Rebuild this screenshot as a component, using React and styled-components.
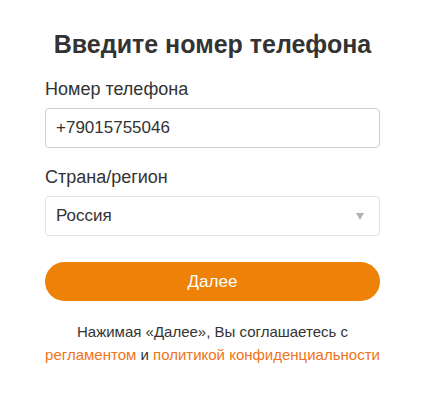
import React from "react";
import styled, { createGlobalStyle } from "styled-components";

const Global = createGlobalStyle`
  html, body { margin: 0; padding: 0; background: #fff; }
  body { font-family: "Liberation Sans", Arial, sans-serif; color: #333; }
  * { box-sizing: border-box; }
`;

const Page = styled.div`
  width: 425px;
  padding: 30px 45px 0;
  display: flex;
  flex-direction: column;
`;

const Title = styled.h1`
  margin: 0;
  font-size: 25px;
  line-height: 28px;
  font-weight: 700;
  text-align: center;
  color: #333;
`;

const Field = styled.div`
  display: flex;
  flex-direction: column;
  gap: 8px;
  margin-top: ${(p) => p.$top}px;
`;

const Label = styled.label`
  font-size: 18px;
  line-height: 21px;
  color: #333;
`;

const Box = styled.div`
  height: 40px;
  border: 1px solid ${(p) => (p.$light ? "#e3e3e3" : "#cfcfcf")};
  border-radius: 4px;
  padding: 0 10px;
  display: flex;
  align-items: center;
  justify-content: space-between;
  font-size: 17px;
  color: #333;
`;

const Arrow = styled.span`
  width: 0;
  height: 0;
  margin-right: 5px;
  border-left: 4px solid transparent;
  border-right: 4px solid transparent;
  border-top: 7px solid #b3b3b3;
`;

const Button = styled.button`
  margin-top: 26px;
  height: 39px;
  border: none;
  border-radius: 20px;
  background: #ee8208;
  color: #fff;
  font-family: "Liberation Sans", Arial, sans-serif;
  font-size: 17px;
  font-weight: 400;
  cursor: pointer;
`;

const Note = styled.p`
  margin: 19px 0 0;
  font-size: 15px;
  line-height: 23px;
  text-align: center;
  color: #333;
`;

const Link = styled.a`
  color: #ee7420;
  text-decoration: none;
`;

export default function App() {
  return (
    <>
      <Global />
      <Page>
        <Title>Введите номер телефона</Title>
        <Field $top={21}>
          <Label>Номер телефона</Label>
          <Box>+79015755046</Box>
        </Field>
        <Field $top={19}>
          <Label>Страна/регион</Label>
          <Box $light>
            Россия
            <Arrow />
          </Box>
        </Field>
        <Button>Далее</Button>
        <Note>
          Нажимая «Далее», Вы соглашаетесь с
          <br />
          <Link href="#">регламентом</Link> и{" "}
          <Link href="#">политикой конфиденциальности</Link>
        </Note>
      </Page>
    </>
  );
}
